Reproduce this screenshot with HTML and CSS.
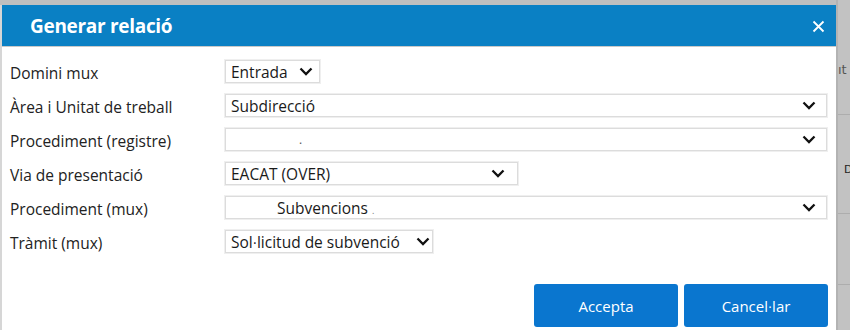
FILE: index.html
```html
<!DOCTYPE html>
<html lang="ca">
<head>
    <meta charset="UTF-8">
    <meta name="viewport" content="width=device-width, initial-scale=1.0">
    <title>Generar relació</title>
    <link rel="stylesheet" href="styles.css">
</head>
<body>
    <div class="page">
        <div class="dialog">
            <div class="dialog-header">
                <h1>Generar relació</h1>
                <svg class="close" width="13" height="13" viewBox="0 0 13 13"><path d="M1.5 1.5 L11.5 11.5 M11.5 1.5 L1.5 11.5" /></svg>
            </div>

            <div class="form">
                <label>Domini mux</label>
                <div class="field">
                    <div class="select select-entrada">
                        <span class="value">Entrada</span>
                        <svg class="chev" width="14" height="9" viewBox="0 0 14 9"><polyline points="1.5,1.5 7,7 12.5,1.5" /></svg>
                    </div>
                </div>

                <label>Àrea i Unitat de treball</label>
                <div class="field">
                    <div class="select select-wide">
                        <span class="value">Subdirecció</span>
                        <svg class="chev" width="14" height="9" viewBox="0 0 14 9"><polyline points="1.5,1.5 7,7 12.5,1.5" /></svg>
                    </div>
                </div>

                <label>Procediment (registre)</label>
                <div class="field">
                    <div class="select select-wide">
                        <span class="value blank">.</span>
                        <svg class="chev" width="14" height="9" viewBox="0 0 14 9"><polyline points="1.5,1.5 7,7 12.5,1.5" /></svg>
                    </div>
                </div>

                <label>Via de presentació</label>
                <div class="field">
                    <div class="select select-via">
                        <span class="value">EACAT (OVER)</span>
                        <svg class="chev" width="14" height="9" viewBox="0 0 14 9"><polyline points="1.5,1.5 7,7 12.5,1.5" /></svg>
                    </div>
                </div>

                <label>Procediment (mux)</label>
                <div class="field">
                    <div class="select select-wide">
                        <span class="value indent">Subvencions <small>.</small></span>
                        <svg class="chev" width="14" height="9" viewBox="0 0 14 9"><polyline points="1.5,1.5 7,7 12.5,1.5" /></svg>
                    </div>
                </div>

                <label>Tràmit (mux)</label>
                <div class="field">
                    <div class="select select-tramit">
                        <span class="value">Sol<span class="mid">·</span>licitud de subvenció</span>
                        <svg class="chev" width="14" height="9" viewBox="0 0 14 9"><polyline points="1.5,1.5 7,7 12.5,1.5" /></svg>
                    </div>
                </div>
            </div>

            <div class="buttons">
                <button class="btn">Accepta</button>
                <button class="btn">Cancel<span class="mid">·</span>lar</button>
            </div>
        </div>

        <!-- page behind the dialog -->
        <div class="behind">
            <div class="behind-text">ıt</div>
            <div class="behind-line"></div>
            <div class="behind-text behind-d">D</div>
            <div class="behind-line"></div>
            <div class="behind-gap"></div>
            <div class="behind-line"></div>
        </div>
    </div>
</body>
</html>
```

FILE: styles.css
```css
body {
    font-family: "Open Sans", "Noto Sans", Arial, sans-serif;
    margin: 0;
    padding: 0;
    background-color: #bfbfbf;
    overflow: hidden;
}

.page {
    display: flex;
    height: 330px;
}

.dialog {
    width: 834px;
    margin-top: 5px;
    background-color: #ffffff;
    border-left: 2px solid #d6d6d6;
    display: flex;
    flex-direction: column;
}

.dialog-header {
    flex-shrink: 0;
    display: flex;
    align-items: center;
    justify-content: space-between;
    height: 41px;
    padding: 0 11px 0 28px;
    background-color: #0a80c4;
    border-bottom: 1px solid #c9c9c9;
    color: #ffffff;
}

.dialog-header h1 {
    margin: 0;
    font-size: 19px;
    font-weight: 700;
    letter-spacing: -0.3px;
}

.close {
    margin-top: 1px;
}

.close path {
    stroke: #ffffff;
    stroke-width: 1.8;
    fill: none;
}

.form {
    flex-shrink: 0;
    display: grid;
    grid-template-columns: 215px 1fr;
    row-gap: 11px;
    padding: 13px 9px 0 8px;
}

.form label {
    box-sizing: border-box;
    font-size: 15.5px;
    color: #222222;
    line-height: 21px;
    height: 23px;
    padding-top: 3px;
    white-space: nowrap;
}

.field {
    display: flex;
    height: 23px;
}

.select {
    display: flex;
    align-items: center;
    justify-content: space-between;
    height: 21px;
    padding: 0 6px 0 5px;
    border: 1px solid #dcdcdc;
    box-shadow: 0 0 0 1px #efefef;
    background-color: #ffffff;
    font-size: 15.5px;
    color: #1a1a1a;
}

.select-entrada {
    width: 82px;
}

.select-wide {
    width: 585px;
    padding-right: 10px;
}

.select-via {
    width: 274px;
    padding-right: 12px;
}

.select-tramit {
    width: 199px;
    padding-right: 2px;
}

.value {
    white-space: nowrap;
}

.mid {
    font-family: "DejaVu Sans", sans-serif;
    font-size: 0.85em;
}

.value.blank {
    color: #555555;
    padding-left: 68px;
    font-size: 12px;
}

.value.indent {
    padding-left: 46px;
}

.value small {
    font-size: 9px;
    color: #777777;
}

.chev {
    flex-shrink: 0;
}

.chev polyline {
    fill: none;
    stroke: #111111;
    stroke-width: 2.3;
}

.buttons {
    flex-shrink: 0;
    display: flex;
    justify-content: flex-end;
    gap: 6px;
    padding: 31px 8px 0 0;
}

.btn {
    width: 144px;
    height: 43px;
    font-family: "Open Sans", "Noto Sans", Arial, sans-serif;
    font-size: 15px;
    color: #ffffff;
    background-color: #0a76cf;
    border: none;
    border-radius: 3px;
}

.behind {
    flex: 1;
    display: flex;
    flex-direction: column;
    border-left: 2px solid #b3b3b3;
    background-color: #c2c2c2;
    overflow: hidden;
    font-family: "DejaVu Sans", sans-serif;
    font-size: 13px;
    color: #555555;
}

.behind-text {
    margin-top: 62px;
    height: 20px;
    white-space: nowrap;
}

.behind-line {
    height: 1px;
    margin-top: 32px;
    background-color: #adadad;
}

.behind-d {
    margin-top: 48px;
    padding-left: 6px;
    height: 18px;
    font-size: 11px;
    color: #222222;
}

.behind-gap {
    height: 38px;
}
```
